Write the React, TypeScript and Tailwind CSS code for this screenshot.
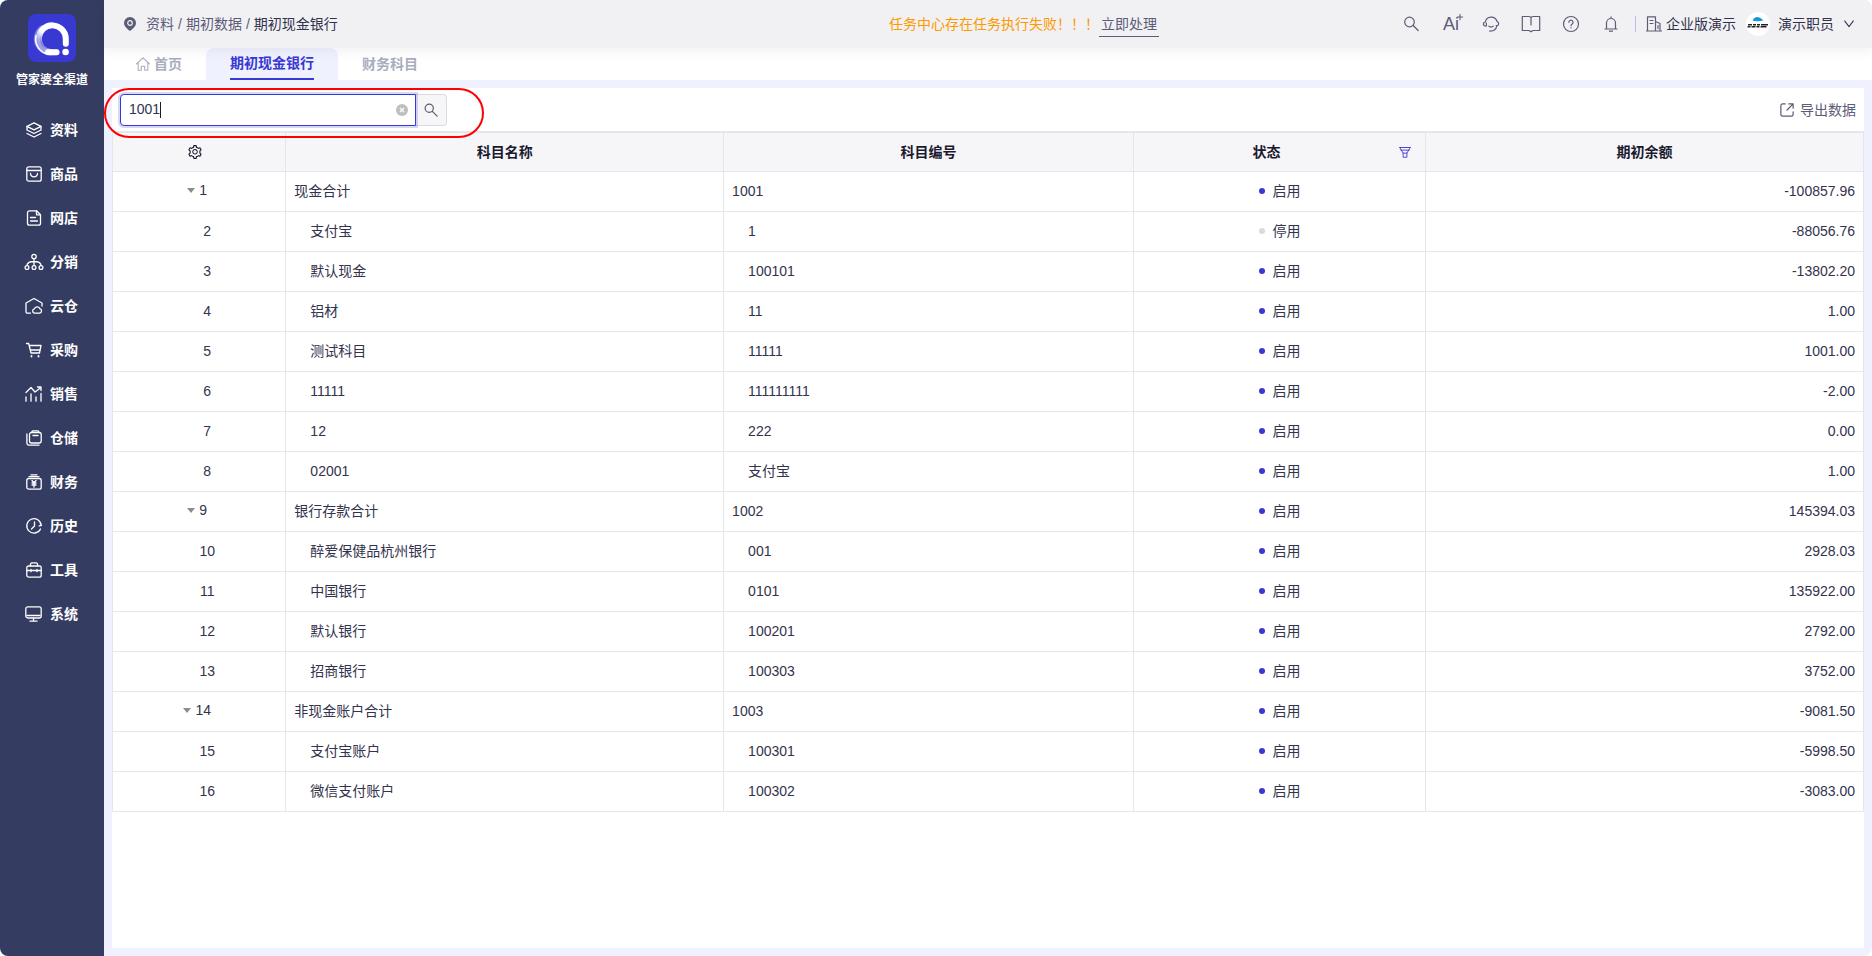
import { useState } from 'react';
import { AiOutlineSetting } from 'react-icons/ai';

// ── Icons ──────────────────────────────────────────────────────────────

function Icon({
  children,
  className = 'size-4',
  stroke = 1.2,
}: {
  children: React.ReactNode;
  className?: string;
  stroke?: number;
}) {
  return (
    <svg
      className={`flex-shrink-0 overflow-visible ${className}`}
      viewBox="0 0 16 16" fill="none" stroke="currentColor"
      strokeWidth={stroke} strokeLinecap="round" strokeLinejoin="round" aria-hidden="true"
    >
      {children}
    </svg>
  );
}

function Logo() {
  return (
    <svg className="size-12" viewBox="0 0 48 48" aria-hidden="true">
      <defs>
        <linearGradient id="ring" x1="0.1" y1="0.75" x2="0.6" y2="0.35">
          <stop offset="0" stopColor="#fff" stopOpacity="0.25" />
          <stop offset="0.5" stopColor="#fff" />
        </linearGradient>
      </defs>
      <rect width="48" height="48" rx="8" fill="#3838d2" />
      <path d="M23 38.300A13.500 13.500 0 1 1 37.800 25V29.800" fill="none" stroke="url(#ring)" strokeWidth="6" strokeLinecap="round" />
      <path d="M13.500 14.500A13.500 13.500 0 0 0 23 38.300H28.500" fill="none" stroke="#fff" strokeOpacity="0.35" strokeWidth="6" strokeLinecap="round" />
      <path d="M8.200 21A15.500 15.500 0 0 0 17.500 39.500" fill="none" stroke="#fff" strokeWidth="1.500" />
      <path d="M20 38.200H28.500" stroke="#fff" strokeWidth="6" strokeLinecap="round" />
      <circle cx="37.600" cy="38" r="3.300" fill="#fff" />
    </svg>
  );
}

function Avatar() {
  return (
    <svg className="size-6" viewBox="0 0 24 24" aria-hidden="true">
      <circle cx="12" cy="12" r="12" fill="#fff" />
      <path d="M6.500 8.600Q8 5 11.500 5q3 .2 4.500 2.300 1 .4 1.500 1Q12 10 6.500 8.600Z" fill="#1296db" />
      <path d="M2 12.800h4M7 12.800h3M11 12.800h3M15 12.800h7M1.500 14.800h3M5.500 14.800h4M10.500 14.800h3M14.500 14.800h6" stroke="#222" strokeWidth="1.500" />
    </svg>
  );
}

// ── Data ───────────────────────────────────────────────────────────────

const menu = [
  {
    name: '资料',
    icon: (
      <>
        <path d="M8 .8 15 4.300 8 7.800 1 4.300Z" />
        <path d="M1 8l7 3.500L15 8M1 11.500 8 15l7-3.500M1 4.300V8M15 4.300V8" />
      </>
    ),
  },
  {
    name: '商品',
    icon: (
      <>
        <rect x=".8" y=".8" width="14.400" height="14.400" rx="2" />
        <path d="M1 4.500h14M4.500 7.500c.5 4.500 6.500 4.500 7 0" />
      </>
    ),
  },
  {
    name: '网店',
    icon: (
      <>
        <path d="M10.500.8H3.500a2 2 0 0 0-2 2v10.400a2 2 0 0 0 2 2h9a2 2 0 0 0 2-2V4.800Z" />
        <path d="M10.500 1v3.800h3.800M4.500 7.500h5M4.500 11h7" />
      </>
    ),
  },
  {
    name: '分销',
    icon: (
      <>
        <circle cx="8" cy="2.500" r="2.200" />
        <circle cx="1" cy="13.500" r="1.900" />
        <circle cx="8" cy="13.500" r="1.900" />
        <circle cx="15" cy="13.500" r="1.900" />
        <path d="M8 4.700v6.900M1 11.600C1 9 4 7.500 8 7.500s7 1.500 7 4.100" />
      </>
    ),
  },
  {
    name: '云仓',
    icon: (
      <>
        <path d="M4.500 15.200H1.500A1.500 1.500 0 0 1 0 13.700V5L8 .5l8 4.500v3" />
        <path d="M8.500 15.200a2.200 2.200 0 0 1-.2-4.300 3 3 0 0 1 5.500-.3 2.400 2.400 0 0 1 0 4.600Z" />
      </>
    ),
  },
  {
    name: '采购',
    icon: (
      <>
        <path d="M.5 1.500h2.200L5 11h8.500L15 3.500H3.200M4.500 8h9.500" />
        <path d="M5.500 14v.6M12.500 14v.6" strokeWidth="1.800" />
      </>
    ),
  },
  {
    name: '销售',
    icon: <path d="M0 11v4.200M5 8v7.200M10 11v4.200M15 7.500v7.700M0 6.500 5 1.500l4 4.500 6-4.500M11.500 1h3.500v3.500" />,
  },
  {
    name: '仓储',
    icon: (
      <>
        <rect x="3.500" y="2.500" width="11.700" height="10.500" rx="2" />
        <path d="M5.500 2.500 6.500.8h5.700l1 1.700M7 5.500h5M.9 4v9a2.200 2.200 0 0 0 2.200 2.200H13" />
      </>
    ),
  },
  {
    name: '财务',
    icon: (
      <>
        <rect x=".8" y="4.500" width="14.400" height="10.700" rx="2" />
        <path d="M3 2.700h10M5 .8h6M6 6.500l2 2.300 2-2.300M8 8.800v4.400M6 9h4M6 11h4" />
      </>
    ),
  },
  {
    name: '历史',
    icon: (
      <>
        <path d="M14.500 11A7.200 7.200 0 1 1 15.200 7.500M15.500 7.300l-2.300.6" />
        <path d="M8.500 4v4L5.500 11" />
      </>
    ),
  },
  {
    name: '工具',
    icon: (
      <>
        <path d="M2.500 4h11a1.700 1.700 0 0 1 1.700 1.700v7.500a2 2 0 0 1-2 2H2.800a2 2 0 0 1-2-2V5.700A1.700 1.700 0 0 1 2.500 4Z" />
        <path d="M4.500 4V2.200A1.400 1.400 0 0 1 6 .8h4a1.400 1.400 0 0 1 1.500 1.400V4M1 8.500h14M5 7.500v2.200M11 7.500v2.200" />
      </>
    ),
  },
  {
    name: '系统',
    icon: (
      <>
        <rect x="-.2" y=".8" width="15.400" height="11.200" rx="2" />
        <path d="M1 9.500h13M7.500 12v3M4 15.200h7" />
      </>
    ),
  },
];

type Row = { level: 0 | 1; name: string; code: string; off?: boolean; balance: string };

const rows: Row[] = [
  { level: 0, name: '现金合计', code: '1001', balance: '-100857.96' },
  { level: 1, name: '支付宝', code: '1', off: true, balance: '-88056.76' },
  { level: 1, name: '默认现金', code: '100101', balance: '-13802.20' },
  { level: 1, name: '铝材', code: '11', balance: '1.00' },
  { level: 1, name: '测试科目', code: '11111', balance: '1001.00' },
  { level: 1, name: '11111', code: '111111111', balance: '-2.00' },
  { level: 1, name: '12', code: '222', balance: '0.00' },
  { level: 1, name: '02001', code: '支付宝', balance: '1.00' },
  { level: 0, name: '银行存款合计', code: '1002', balance: '145394.03' },
  { level: 1, name: '醉爱保健品杭州银行', code: '001', balance: '2928.03' },
  { level: 1, name: '中国银行', code: '0101', balance: '135922.00' },
  { level: 1, name: '默认银行', code: '100201', balance: '2792.00' },
  { level: 1, name: '招商银行', code: '100303', balance: '3752.00' },
  { level: 0, name: '非现金账户合计', code: '1003', balance: '-9081.50' },
  { level: 1, name: '支付宝账户', code: '100301', balance: '-5998.50' },
  { level: 1, name: '微信支付账户', code: '100302', balance: '-3083.00' },
];

// ── Layout parts ───────────────────────────────────────────────────────

function Sidebar() {
  return (
    <aside className="w-26 flex-shrink-0 bg-[#353c61] text-white">
      <div className="flex flex-col items-center pt-3.5">
        <Logo />
        <span className="mt-2 text-xs leading-5 font-bold">管家婆全渠道</span>
      </div>
      <nav className="mt-4.5 flex flex-col">
        {menu.map((item) => (
          <a key={item.name} href="#" className="flex h-11 items-center justify-center gap-2 text-sm font-bold">
            <Icon stroke={1.3}>{item.icon}</Icon>
            {item.name}
          </a>
        ))}
      </nav>
    </aside>
  );
}

function Header() {
  return (
    <header className="relative z-10 flex h-12 items-center bg-[#f1f1f3] pr-4 pl-5 text-sm text-[#5c5c78] shadow-[0_2px_12px_rgba(0,0,0,0.07)]">
      <div className="flex flex-1 items-center">
        <svg className="mr-2.5 h-3.5 w-3" viewBox="0 0 12 14" aria-hidden="true">
          <path d="M6 0a6 6 0 0 1 6 6c0 3.500-3.500 6-6 8-2.500-2-6-4.500-6-8a6 6 0 0 1 6-6Z" fill="currentColor" />
          <circle cx="6" cy="6" r="2.300" fill="none" stroke="#f1f1f3" strokeWidth="1.200" />
        </svg>
        <a href="#">资料</a>
        <span className="mx-1">/</span>
        <a href="#">期初数据</a>
        <span className="mx-1">/</span>
        <span className="text-[#33334d]">期初现金银行</span>
      </div>
      <div className="ml-17 flex items-center text-[#ff9900]">
        任务中心存在任务执行失败！！！
        <a href="#" className="border-b border-[#5c5c78] px-0.5 leading-6 text-[#5c5c78]">立即处理</a>
      </div>
      <div className="flex flex-1 items-center justify-end">
        <div className="flex items-center gap-6">
          <button aria-label="搜索">
            <Icon><circle cx="6.500" cy="6" r="4.800" /><path d="m10.200 9.500 5 5" /></Icon>
          </button>
          <button aria-label="Ai" className="relative w-4 text-lg leading-4 font-medium">
            Ai
            <Icon className="absolute -top-0.5 left-3.5 size-1.5" stroke={2.8}><path d="M8 1v14M1 8h14" /></Icon>
          </button>
          <button aria-label="客服">
            <Icon>
              <path d="M2.300 6A6 6 0 0 1 14 5.500M2.300 6C-.3 6.300-.3 9.800 2.300 10.200L3.500 9.800 3.200 7M14 5.500c2.300.8 2.200 4 0 4.300l-.8-.3M13.800 9.800c-.7 3.600-3.300 5.500-7.300 5.200M5.800 10.200c1 1.200 3.500 1.200 4.500 0" />
            </Icon>
          </button>
          <button aria-label="手册">
            <Icon><path d="M-.7.5H6A2 2 0 0 1 8 2 2 2 0 0 1 10 .5h6.700v14H10L8 15.800l-2-1.300H-.7ZM8 2v7" /></Icon>
          </button>
          <button aria-label="帮助">
            <Icon><circle cx="8" cy="8" r="7.500" /><path d="M5.900 6.300a2.100 2.100 0 1 1 3.200 1.800C8.300 8.600 8 8.900 8 9.700M8 11.500v.3" /></Icon>
          </button>
          <button aria-label="通知">
            <Icon><path d="M8 .8v1M3.500 12.500V7a4.500 4.500 0 0 1 9 0v5.500M2 13h12M6.500 15.200h3" /></Icon>
          </button>
        </div>
        <span className="mr-2.5 ml-4 h-4 w-px bg-[#b9bdf0]" />
        <Icon><path d="M1.500 15V.8h8V15M.5 15h15M9.500 5.500l4.500 2V15M4 4.500h3M4 7.500h3M12 9.500v3" /></Icon>
        <span className="ml-1 text-[#33334d]">企业版演示</span>
        <button className="ml-2.5 flex items-center text-[#33334d]">
          <Avatar />
          <span className="ml-2">演示职员</span>
          <Icon className="ml-2 size-3.5"><path d="m3 4.500 5 6.500 5-6.500" /></Icon>
        </button>
      </div>
    </header>
  );
}

function Tabs() {
  return (
    <div className="flex h-8 bg-white text-sm font-bold text-[#a9adbd]">
      <a href="#" className="ml-8 flex items-center gap-1">
        <Icon className="size-3.5"><path d="M.5 8 8 1l7.500 7M2.500 6.500v8.700H6v-4.700h4v4.700h3.500V6.500" /></Icon>
        首页
      </a>
      <a href="#" className="mx-6 flex rounded-t-lg bg-[#eff1ff] px-6 text-[#3838d2]">
        <span className="flex items-center border-b-2 border-[#3838d2]">期初现金银行</span>
      </a>
      <a href="#" className="flex items-center">财务科目</a>
    </div>
  );
}

function Toolbar() {
  const [query, setQuery] = useState('1001');
  const [touched, setTouched] = useState(false);

  return (
    <div className="relative flex h-[43px] items-center justify-between px-2">
      <form className="flex" onSubmit={(e) => e.preventDefault()}>
        <div className="relative">
          <input
            aria-label="搜索科目"
            value={query}
            onFocus={() => setTouched(true)}
            onChange={(e) => setQuery(e.target.value)}
            className="block h-8 w-74 rounded-l border border-[#3838d2] bg-white pr-8 pb-0.5 pl-2 text-sm text-[#33334d] shadow-[0_0_0_2px_rgba(56,56,210,0.2)] outline-none"
          />
          {!touched && <span className="pointer-events-none absolute top-2 left-10 h-4 w-px bg-[#1a1a2e]" />}
          <button type="button" aria-label="清空" onClick={() => setQuery('')} className="absolute top-2.5 right-2">
            <svg className="size-3" viewBox="0 0 12 12" aria-hidden="true">
              <circle cx="6" cy="6" r="6" fill="#bfbfbf" />
              <path d="m4 4 4 4M8 4 4 8" stroke="#fff" strokeWidth="1.200" />
            </svg>
          </button>
        </div>
        <button
          aria-label="查询"
          className="flex h-8 w-[31px] items-center justify-center rounded-r border border-l-0 border-[#d9d9e0] bg-[#f6f6f9] text-[#5c5c78]"
        >
          <Icon className="size-3.5" stroke={1.4}><circle cx="6" cy="6" r="4.700" /><path d="m9.500 9.500 5.500 5.500" /></Icon>
        </button>
      </form>
      <button className="flex items-center gap-1.5 text-sm text-[#5c5c78]">
        <Icon className="size-3.5" stroke={1.4}>
          <path d="M6 1H3a2 2 0 0 0-2 2v10a2 2 0 0 0 2 2h10a2 2 0 0 0 2-2v-3M10 1h5v5M15 1 8 8" />
        </Icon>
        导出数据
      </button>
      {/* highlight ring round the search box */}
      <div className="pointer-events-none absolute top-0 -left-2 z-20 h-[50px] w-95 rounded-full border-2 border-[#ff0000]" />
    </div>
  );
}

function AccountTable() {
  const th = 'h-[39px] border border-[#e5e5ea] text-center font-bold text-[#1a1a2e]';
  const td = 'h-10 border border-[#e5e5ea]';

  return (
    <table className="w-full table-fixed border-collapse border-t-2 border-[#e5e5ea] text-sm">
      <colgroup>
        <col className="w-[9.9%]" />
        <col className="w-[25%]" />
        <col className="w-[23.4%]" />
        <col className="w-[16.7%]" />
        <col className="w-[25%]" />
      </colgroup>
      <thead className="bg-[#f6f6f9]">
        <tr>
          <th className={th}>
            <button aria-label="列设置" className="block w-full pr-2">
              <AiOutlineSetting className="mx-auto size-4" />
            </button>
          </th>
          <th className={th}>科目名称</th>
          <th className={th}>科目编号</th>
          <th className={th}>
            <div className="flex items-center pr-3.5">
              <span className="flex-1">状态</span>
              <button aria-label="筛选" className="text-[#3838d2]">
                <Icon className="size-3"><path d="M1 2h14M2.500 5.500h11M1 2l4.500 7.500V15h5V9.500L15 2M5.500 9.500h5" /></Icon>
              </button>
            </div>
          </th>
          <th className={th}>期初余额</th>
        </tr>
      </thead>
      <tbody className="text-[#33334d]">
        {rows.map((row, i) => (
          <tr key={row.code}>
            <td className={`${td} text-center`}>
              {row.level === 0 ? (
                <button className="mx-auto flex items-center gap-1 pr-1 pb-0.5">
                  <span className="border-x-4 border-t-[5px] border-x-transparent border-t-[#8c8c8c]" />
                  {i + 1}
                </button>
              ) : (
                <span className="pl-4">{i + 1}</span>
              )}
            </td>
            <td className={`${td} ${row.level ? 'pl-6' : 'pl-2'}`}>{row.name}</td>
            <td className={`${td} ${row.level ? 'pl-6' : 'pl-2'}`}>{row.code}</td>
            <td className={td}>
              <div className="flex items-center justify-center gap-2">
                <span className={`size-1.5 rounded-full ${row.off ? 'bg-[#d9d9e0]' : 'bg-[#3838d2]'}`} />
                {row.off ? '停用' : '启用'}
              </div>
            </td>
            <td className={`${td} pr-2 text-right`}>{row.balance}</td>
          </tr>
        ))}
      </tbody>
    </table>
  );
}

// ── Page ───────────────────────────────────────────────────────────────

export default function App() {
  return (
    <div className="flex min-h-screen overflow-hidden rounded-lg bg-[#eff1ff] font-['Liberation_Sans','Noto_Sans_CJK_SC',sans-serif]">
      <Sidebar />
      <div className="flex min-w-0 flex-1 flex-col">
        <Header />
        <Tabs />
        <main className="m-2 flex-1 bg-white">
          <Toolbar />
          <AccountTable />
        </main>
      </div>
    </div>
  );
}
